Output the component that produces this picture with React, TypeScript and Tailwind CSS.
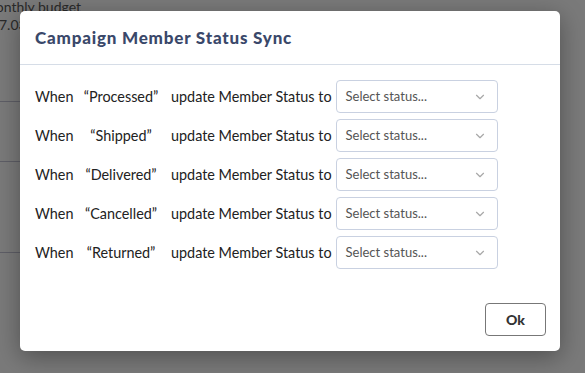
import { ChevronDown } from "lucide-react";

const STATUSES = ["Processed", "Shipped", "Delivered", "Cancelled", "Returned"];

function StatusSelect() {
  return (
    <div className="flex h-[33px] w-[162px] items-center justify-between rounded-[4px] border border-[#c9d1e1] bg-white pl-[9px] pr-[10px]">
      <span className="text-[13px] text-[#555]">Select status...</span>
      <ChevronDown className="h-[14px] w-[14px] text-[#a8a8a8]" strokeWidth={2} />
    </div>
  );
}

function SyncRow({ label }: { label: string }) {
  return (
    <div className="flex items-center text-[14.4px] text-[#222]">
      <span className="w-[40px]">When</span>
      <span className="w-[92px] text-center">“{label}”</span>
      <span className="ml-[4px]">update Member Status to</span>
      <div className="ml-[4px]">
        <StatusSelect />
      </div>
    </div>
  );
}

export default function App() {
  return (
    <div
      className="relative h-[373px] w-full overflow-hidden bg-[#f4f4f4]"
      style={{ fontFamily: "Lato, 'Liberation Sans', sans-serif" }}
    >
      {/* page behind the modal */}
      <div className="flex flex-col text-[14px] text-[#555]">
        <div className="-ml-[17px] mt-[-3px] leading-[20px]">Monthly budget</div>
        <div className="-ml-[1px] leading-[16px]">7.03</div>
        <div className="h-[69px] w-[40px] border-b border-[#bcbccd]" />
        <div className="h-[60px] w-[40px] border-b border-[#bcbccd]" />
        <div className="h-[91px] w-[40px] border-b border-[#bcbccd]" />
      </div>

      {/* overlay */}
      <div className="absolute inset-0 bg-black/50 pl-[20px] pt-[11px]">
        <div className="flex h-[340px] w-[540px] flex-col rounded-[5px] bg-white shadow-[0_6px_24px_rgba(0,0,0,0.35)]">
          <div className="flex h-[54px] items-center border-b border-[#d6dde7] px-[15px]">
            <h2 className="text-[17px] font-black tracking-[0.8px] text-[#3a486a]">
              Campaign Member Status Sync
            </h2>
          </div>

          <div className="flex flex-col gap-[6px] px-[15px] pt-[15px]">
            {STATUSES.map((s) => (
              <SyncRow key={s} label={s} />
            ))}
          </div>

          <div className="mt-auto flex justify-end px-[14px] pb-[15px]">
            <button className="h-[33px] w-[61px] rounded-[4px] border border-[#777] bg-white text-[14px] font-black text-[#333]">
              Ok
            </button>
          </div>
        </div>
      </div>
    </div>
  );
}
